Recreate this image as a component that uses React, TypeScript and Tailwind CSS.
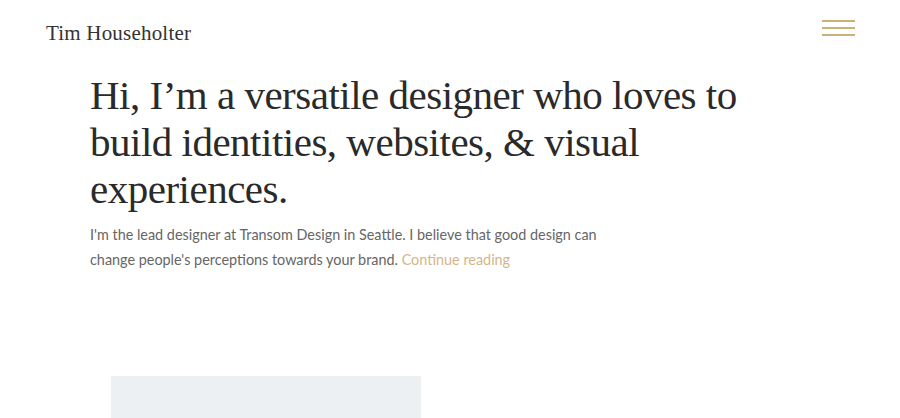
export default function App() {
  return (
    <div className="w-[900px] h-[418px] overflow-hidden bg-white relative">
      <header className="flex items-start justify-between pl-[46px] pr-[45px] pt-[21px]">
        <div className="text-[21px] leading-[24px] text-[#333] tracking-[0.2px]" style={{ fontFamily: '"Liberation Serif", serif' }}>
          Tim Householter
        </div>
        <button className="flex flex-col gap-[5px] w-[33px] mt-[-1px]">
          <span className="block h-[2px] w-full bg-[#cdb079]" />
          <span className="block h-[2px] w-full bg-[#cdb079]" />
          <span className="block h-[2px] w-full bg-[#cdb079]" />
        </button>
      </header>
      <main className="pl-[90px] pt-[27px]">
        <h1 className="text-[41px] leading-[47px] text-[#2a2a2a] tracking-[-0.5px] w-[680px]" style={{ fontFamily: '"Liberation Serif", serif' }}>
          Hi, I’m a versatile designer who loves to build identities, websites, &amp; visual experiences.
        </h1>
        <p className="mt-[9px] text-[14.4px] leading-[25px] text-[#666] w-[540px]" style={{ fontFamily: 'Lato, sans-serif' }}>
          I'm the lead designer at Transom Design in Seattle. I believe that good design can change people's perceptions towards your brand.{' '}
          <a className="text-[#d4b68a]">Continue reading</a>
        </p>
        <div className="mt-[104px] ml-[21px] w-[310px] h-[60px] bg-[#edf0f3]" />
      </main>
    </div>
  );
}
